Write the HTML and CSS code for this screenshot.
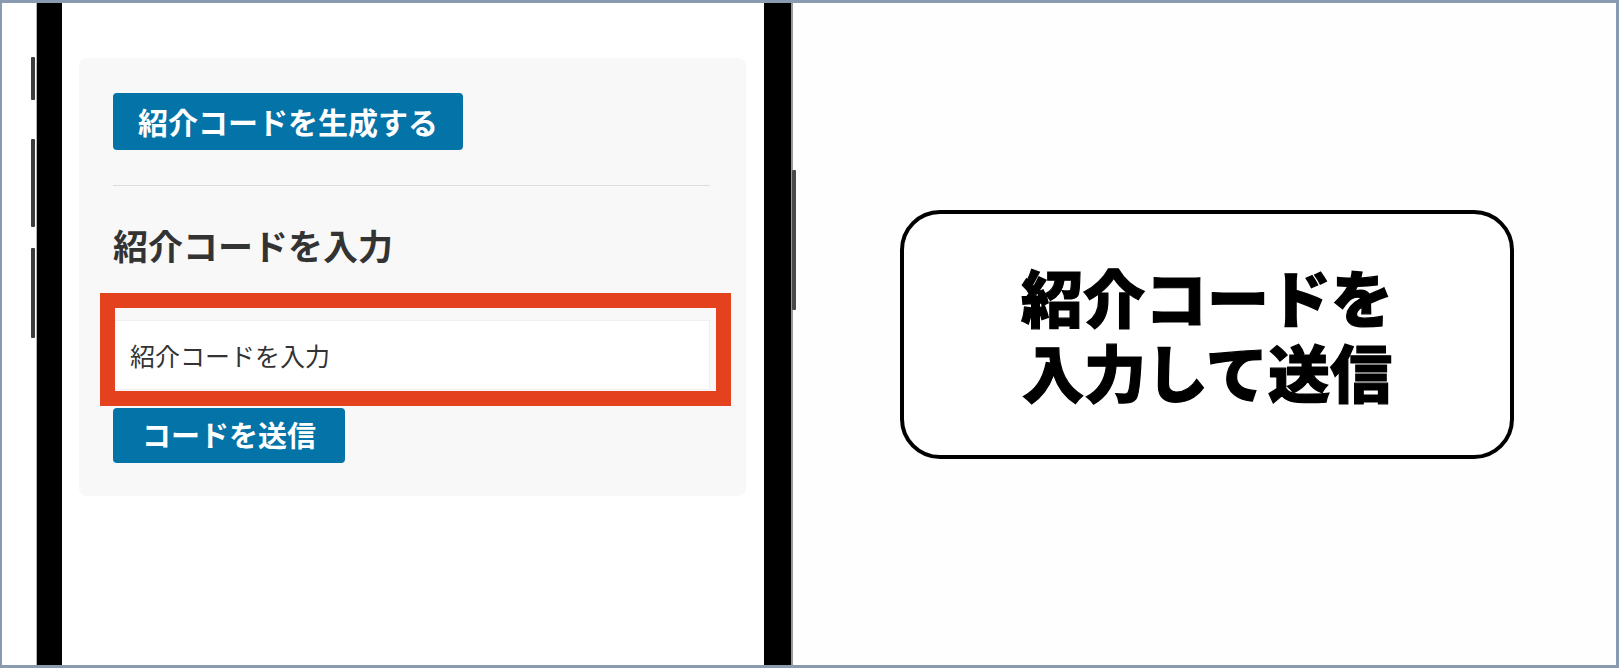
FILE: index.html
```html
<!DOCTYPE html>
<html lang="ja">
<head>
  <meta charset="utf-8">
  <title>紹介コード</title>
  <link rel="stylesheet" href="styles.css">
</head>
<body>

  <div class="frame">
    <div class="device-area">
      <div class="phone">
        <span class="side-btn side-btn--one"></span>
        <span class="side-btn side-btn--two"></span>
        <span class="side-btn side-btn--three"></span>
        <span class="side-btn side-btn--power"></span>

        <div class="screen">
          <section class="card">
            <button class="wp-btn wp-btn--large">紹介コードを生成する</button>
            <hr class="divider">
            <h2 class="card-title">紹介コードを入力</h2>
            <div class="code-field">
              <input type="text" class="code-input" placeholder="紹介コードを入力">
              <!-- annotation frame drawn over the field -->
              <span class="highlight"></span>
            </div>
            <button class="wp-btn wp-btn--small">コードを送信</button>
          </section>
        </div>
      </div>
    </div>

    <div class="caption-area">
      <div class="caption">
        <span class="caption-line">紹介コードを</span>
        <span class="caption-line">入力して送信</span>
      </div>
    </div>
  </div>

</body>
</html>
```

FILE: styles.css
```css
    body {
      margin: 0;
      background-color: #fff;
      font-family: "Noto Sans CJK JP", "Noto Sans", sans-serif;
    }

    .frame {
      display: flex;
      height: 668px;
      box-sizing: border-box;
      border: 3px solid #8a9ab0;
      border-left-width: 2px;
      background-color: #fefefe;
      overflow: hidden;
    }

    /* left half: the phone mockup */
    .device-area {
      display: flex;
      padding-left: 35px;
      background-color: #fff;
    }

    .phone {
      position: relative;
      display: flex;
      border-left: 25px solid #000;
      border-right: 27px solid #000;
      box-shadow: -1px 0 0 #b5b5b5, 2px 0 0 #9a9a9a;
    }

    .side-btn {
      position: absolute;
      width: 4px;
      background-color: #3c3c3c;
      border-radius: 1px;
    }

    .side-btn--one {
      left: -31px;
      top: 54px;
      height: 43px;
    }

    .side-btn--two {
      left: -31px;
      top: 136px;
      height: 88px;
    }

    .side-btn--three {
      left: -31px;
      top: 245px;
      height: 90px;
    }

    .side-btn--power {
      right: -32px;
      top: 167px;
      height: 140px;
      background-color: #4a4a4a;
    }

    .screen {
      width: 702px;
      background-color: #fff;
      padding: 55px 18px 0 17px;
      box-sizing: border-box;
    }

    .card {
      display: flex;
      flex-direction: column;
      align-items: flex-start;
      padding: 35px 36px 33px 34px;
      background-color: #f8f8f8;
      border-radius: 8px;
    }

    .wp-btn {
      border: none;
      border-radius: 4px;
      background-color: #0473a8;
      color: #fff;
      font-family: "Noto Sans CJK JP", sans-serif;
      font-weight: bold;
      line-height: 1;
      cursor: pointer;
    }

    .wp-btn--large {
      height: 57px;
      padding: 0 25px 2px;
      font-size: 30px;
    }

    .wp-btn--small {
      height: 55px;
      margin-top: 18px;
      padding: 0 29px 2px;
      font-size: 29px;
    }

    .divider {
      align-self: stretch;
      height: 1px;
      margin: 35px 0 0;
      border: none;
      background-color: #dcdcdc;
    }

    .card-title {
      margin: 38px 0 0;
      font-size: 35px;
      line-height: 42px;
      font-weight: bold;
      color: #333;
    }

    .code-field {
      position: relative;
      align-self: stretch;
      margin-top: 54px;
    }

    .code-input {
      display: block;
      width: 100%;
      height: 70px;
      box-sizing: border-box;
      padding: 0 16px;
      border: 1px solid #f0f0f0;
      background-color: #fff;
      font-family: "Noto Sans CJK JP", sans-serif;
      font-size: 25px;
      color: #333;
    }

    .code-input::placeholder {
      color: #333;
    }

    .highlight {
      position: absolute;
      left: -13px;
      top: -27px;
      right: -21px;
      bottom: -16px;
      border: 15px solid #e4421f;
      pointer-events: none;
    }

    /* right half: the caption bubble */
    .caption-area {
      flex: 1;
      display: flex;
      align-items: center;
      justify-content: center;
      padding-left: 7px;
    }

    .caption {
      width: 614px;
      height: 249px;
      box-sizing: border-box;
      display: flex;
      flex-direction: column;
      align-items: center;
      justify-content: center;
      border: 4px solid #000;
      border-radius: 40px;
      background-color: #fff;
      color: #000;
      font-size: 62px;
      font-weight: 900;
      line-height: 75px;
      -webkit-text-stroke: 1.2px #000;
    }

    .caption-line {
      display: block;
    }
```
